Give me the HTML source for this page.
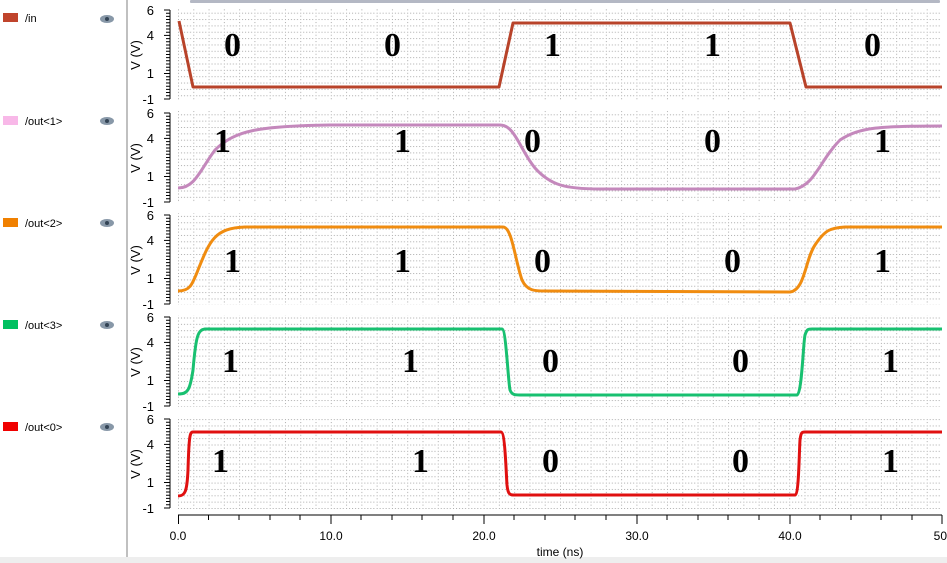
<!DOCTYPE html>
<html><head><style>
body{margin:0;width:947px;height:563px;overflow:hidden;background:#fff;font-family:"Liberation Sans",sans-serif}
</style></head><body>
<svg width="947" height="563" xmlns="http://www.w3.org/2000/svg" style="position:absolute;left:0;top:0">
<defs>
<pattern id="g" x="178" y="0" width="15.28" height="6.35" patternUnits="userSpaceOnUse">
<rect x="0" y="0" width="1" height="1" fill="#aaa"/><rect x="3" y="0" width="1" height="1" fill="#aaa"/><rect x="6" y="0" width="1" height="1" fill="#aaa"/><rect x="9" y="0" width="1" height="1" fill="#aaa"/><rect x="12" y="0" width="1" height="1" fill="#aaa"/>
<rect x="0" y="3" width="1" height="1" fill="#aaa"/>
</pattern>
<g id="ax">
<line x1="170" y1="0" x2="170" y2="89" stroke="#000"/>
<g stroke="#000">
<line x1="164" y1="0" x2="170" y2="0"/><line x1="164" y1="25.4" x2="170" y2="25.4"/><line x1="164" y1="63.5" x2="170" y2="63.5"/><line x1="164" y1="89" x2="170" y2="89"/>
<path d="M166 3.2h4M166 6.4h4M166 9.5h4M166 12.7h4M166 15.9h4M166 19h4M166 22.2h4M166 28.6h4M166 31.8h4M166 35h4M166 38.1h4M166 41.3h4M166 44.5h4M166 47.6h4M166 50.8h4M166 54h4M166 57.2h4M166 60.3h4M166 66.7h4M166 69.8h4M166 73h4M166 76.2h4M166 79.4h4M166 82.5h4M166 85.7h4"/>
</g>
<text x="154" y="5" font-size="13" text-anchor="end">6</text>
<text x="154" y="30" font-size="13" text-anchor="end">4</text>
<text x="154" y="68" font-size="13" text-anchor="end">1</text>
<text x="154" y="94" font-size="13" text-anchor="end">-1</text>
<text transform="translate(140,45) rotate(-90)" font-size="13" text-anchor="middle">V (V)</text>
</g>
</defs>
<rect x="126" y="0" width="2" height="557" fill="#c0c0c0"/>
<rect x="0" y="557" width="947" height="6" fill="#eee"/>
<rect x="190" y="0" width="750" height="3" rx="1" fill="#b4b8c4"/>
<rect x="178" y="8" width="764" height="92" fill="url(#g)"/>
<rect x="178" y="111" width="764" height="92" fill="url(#g)"/>
<rect x="178" y="213" width="764" height="92" fill="url(#g)"/>
<rect x="178" y="315" width="764" height="92" fill="url(#g)"/>
<rect x="178" y="417" width="764" height="92" fill="url(#g)"/>
<use href="#ax" y="10"/><use href="#ax" y="113"/><use href="#ax" y="215"/><use href="#ax" y="317"/><use href="#ax" y="419"/>
<g font-size="11">
<rect x="3" y="13" width="15" height="9" fill="#c0442c"/><text x="25" y="22">/in</text>
<rect x="3" y="116" width="15" height="9" fill="#f8b8e8"/><text x="25" y="125">/out&lt;1&gt;</text>
<rect x="3" y="218" width="15" height="9" fill="#f08000"/><text x="25" y="227">/out&lt;2&gt;</text>
<rect x="3" y="320" width="15" height="9" fill="#00c060"/><text x="25" y="329">/out&lt;3&gt;</text>
<rect x="3" y="422" width="15" height="9" fill="#f00000"/><text x="25" y="431">/out&lt;0&gt;</text>
</g>
<g fill="#8898a8">
<ellipse cx="107" cy="19" rx="7" ry="4"/><ellipse cx="107" cy="121" rx="7" ry="4"/><ellipse cx="107" cy="223" rx="7" ry="4"/><ellipse cx="107" cy="325" rx="7" ry="4"/><ellipse cx="107" cy="427" rx="7" ry="4"/>
</g>
<g fill="#345"><circle cx="107" cy="19" r="2"/><circle cx="107" cy="121" r="2"/><circle cx="107" cy="223" r="2"/><circle cx="107" cy="325" r="2"/><circle cx="107" cy="427" r="2"/></g>
<g fill="none" stroke-width="3" stroke-linejoin="round">
<path d="M179 21 L193 87 L499 87 L513 23 L790 23 L806 87 L942 87" stroke="#b8432a"/>
<path d="M178 188 C195 188 200 170 215 150 C235 130 260 126 330 125 L500 125 C515 125 520 150 535 168 C550 185 565 189 600 189 L795 189 C815 185 820 160 840 140 C860 127 880 126 942 126" stroke="#c488bc"/>
<path d="M178 291 C190 291 192 285 198 270 C210 240 215 228 245 227 L503 227 C512 227 515 260 522 280 C527 291 535 291 545 291 L790 292 C805 290 805 260 815 245 C825 230 830 228 845 227 L942 227" stroke="#f08c10"/>
<path d="M178 394 C188 394 190 390 193 370 C196 335 198 330 205 329 L502 329 C506 329 508 380 510 390 C512 395 515 395 520 395 L797 395 C802 393 803 345 805 335 C807 329 808 329 812 329 L942 329" stroke="#18c070"/>
<path d="M178 496 C185 496 187 492 188 470 C189 435 190 432 193 432 L501 432 C505 432 506 470 507 485 C508 495 510 495 515 495 L795 495 C799 494 799 455 800 440 C801 432 802 432 805 432 L942 432" stroke="#e01010"/>
</g>
<g font-family="Liberation Serif,serif" font-weight="bold" font-size="34">
<text x="224" y="56">0</text><text x="384" y="56">0</text><text x="544" y="56">1</text><text x="704" y="56">1</text><text x="864" y="56">0</text>
<text x="214" y="152">1</text><text x="394" y="152">1</text><text x="524" y="152">0</text><text x="704" y="152">0</text><text x="874" y="152">1</text>
<text x="224" y="272">1</text><text x="394" y="272">1</text><text x="534" y="272">0</text><text x="724" y="272">0</text><text x="874" y="272">1</text>
<text x="222" y="372">1</text><text x="402" y="372">1</text><text x="542" y="372">0</text><text x="732" y="372">0</text><text x="882" y="372">1</text>
<text x="212" y="472">1</text><text x="412" y="472">1</text><text x="542" y="472">0</text><text x="732" y="472">0</text><text x="882" y="472">1</text>
</g>
<line x1="178" y1="515" x2="942" y2="515" stroke="#000"/>
<g stroke="#000">
<path d="M178.5 515v9M208.5 515v5M239 515v5M270 515v5M300 515v5M331 515v9M361 515v5M392 515v5M422 515v5M453 515v5M484 515v9M514 515v5M545 515v5M575 515v5M606 515v5M637 515v9M667 515v5M698 515v5M728 515v5M759 515v5M790 515v9M820 515v5M851 515v5M881 515v5M912 515v5M942 515v9"/>
</g>
<g font-size="12" text-anchor="middle">
<text x="178" y="540">0.0</text><text x="331" y="540">10.0</text><text x="484" y="540">20.0</text><text x="637" y="540">30.0</text><text x="790" y="540">40.0</text><text x="942" y="540">50.</text>
<text x="560" y="556">time (ns)</text>
</g>
</svg>
</body></html>
